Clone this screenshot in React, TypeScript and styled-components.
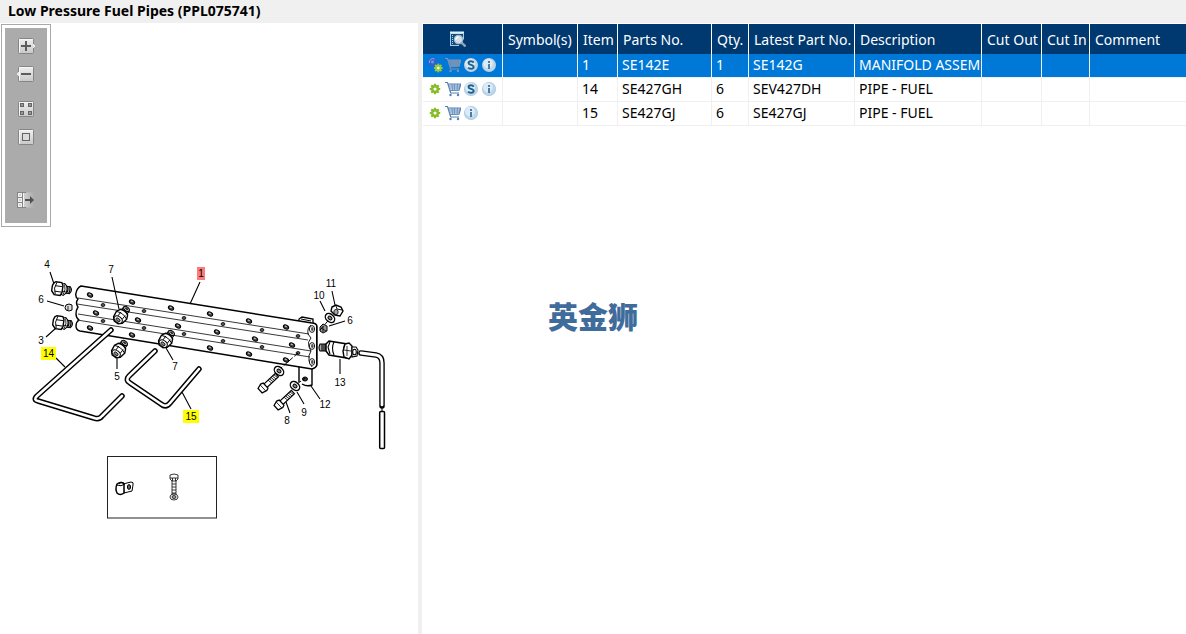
import React from "react";
import styled, { createGlobalStyle, css } from "styled-components";

const GlobalStyle = createGlobalStyle`
  *, *::before, *::after { box-sizing: border-box; }
  html, body, #root { height: 100%; }
  body {
    margin: 0;
    background: #ffffff;
    color: #000000;
    font-family: "Noto Sans", "Open Sans", sans-serif;
  }
`;

const Page = styled.div`
  display: flex;
  flex-direction: column;
  min-height: 100%;
  position: relative;
`;

const TitleBar = styled.header`
  background: #f0f0f0;
  padding: 0 8px 1px;
`;

const Title = styled.h1`
  margin: 0;
  font-size: 14px;
  line-height: 22px;
  font-weight: 700;
`;

const Workspace = styled.main`
  flex: 1;
  display: flex;
  align-items: stretch;
`;

const Viewer = styled.section`
  flex: 0 0 422px;
  border-right: 4px solid #f0f0f0;
  display: flex;
  flex-direction: column;
  align-items: flex-start;
  padding: 1px 0 0 1px;
`;

const ToolFrame = styled.div`
  border: 1px solid #a9a9a9;
  padding: 3px;
`;

const ToolStrip = styled.div`
  background: #ababab;
  display: flex;
  flex-direction: column;
  align-items: center;
  width: 42px;
  padding: 9px 0 14px;
`;

const ToolGroup = styled.div<{ $before?: number }>`
  margin-top: ${(p) => p.$before ?? 0}px;
`;

const IconButton = styled.button<{ $size: number }>`
  width: ${(p) => p.$size}px;
  height: ${(p) => p.$size}px;
  padding: 0;
  border: 0;
  background: none;
  display: block;
  cursor: pointer;
  svg { display: block; width: 100%; height: 100%; }
`;

const Drawing = styled.svg`
  display: block;
  width: 417px;
  height: auto;
  font-family: "Liberation Sans", Arial, sans-serif;
  font-size: 10px;
`;

const PartsPane = styled.section`
  flex: 1;
  min-width: 0;
  padding: 1px 0 0 1px;
`;

const Table = styled.table`
  width: 100%;
  table-layout: fixed;
  border-collapse: separate;
  border-spacing: 0;
  font-size: 14px;
`;

const cell = css`
  overflow: hidden;
  white-space: nowrap;
  text-align: left;
  font-weight: 400;
  vertical-align: middle;
`;

const HeadCell = styled.th`
  ${cell}
  height: 30px;
  padding: 2px 0 0 5px;
  line-height: 20px;
  background: #003870;
  color: #ffffff;
  border-right: 1px solid #ffffff;
  &:last-child { border-right: 0; }
`;

const SearchCell = styled(HeadCell)`
  padding: 0 0 0 27px;
`;

const Cell = styled.td`
  ${cell}
  height: 24px;
  padding: 0 0 2px 4px;
  line-height: 20px;
  border-right: 1px solid #f0f0f0;
  border-bottom: 1px solid #f0f0f0;
  &:last-child { border-right: 0; }
`;

const Row = styled.tr<{ $selected?: boolean }>`
  ${(p) => p.$selected && css`
    background: #0078d7;
    color: #ffffff;
  `}
`;

const Actions = styled.div`
  display: flex;
  gap: 2px;
`;

const Brand = styled.div`
  position: absolute;
  top: 50%;
  left: 50%;
  transform: translate(-50%, -50%);
  padding-bottom: 4px;
  color: #3f6c9b;
  font-family: "Noto Sans CJK SC", sans-serif;
  font-size: 30px;
  line-height: 32px;
  font-weight: 900;
  pointer-events: none;
`;

/* ---------- viewer toolbar icons ---------- */

const Plate = () => (
  <>
    <rect x="1.5" y="1.5" width="15" height="15" rx="1" fill="url(#plate)" stroke="#858585" />
    <path d="M2.5 15.5v-13h13" fill="none" stroke="#f7f7f7" />
  </>
);

const ZoomInIcon = () => (
  <svg viewBox="0 0 18 18">
    <defs>
      <linearGradient id="plate" x1="0" y1="0" x2="0" y2="1">
        <stop offset="0" stopColor="#f0f0f0" />
        <stop offset="1" stopColor="#c8c8c8" />
      </linearGradient>
      <linearGradient id="fade" x1="0" y1="0" x2="1" y2="0">
        <stop offset="0" stopColor="#e6e6e6" />
        <stop offset="1" stopColor="#ababab" />
      </linearGradient>
    </defs>
    <Plate />
    <path d="M16 7h1v1h1v2h-1v1h-1z" fill="#e8e8e8" />
    <path d="M9 4v10M4 9h10" stroke="#5c5c5c" strokeWidth="2" />
  </svg>
);

const ZoomOutIcon = () => (
  <svg viewBox="0 0 18 18">
    <Plate />
    <path d="M2 7H1v1H0v2h1v1h1z" fill="#e8e8e8" />
    <path d="M4 9h10" stroke="#5c5c5c" strokeWidth="2" />
  </svg>
);

const FitIcon = () => (
  <svg viewBox="0 0 18 18">
    <Plate />
    {[[3.5, 3.5], [11.5, 3.5], [3.5, 11.5], [11.5, 11.5]].map(([x, y]) => (
      <rect key={`${x}-${y}`} x={x} y={y} width="3" height="3" fill="#989898" stroke="#656565" />
    ))}
  </svg>
);

const ActualSizeIcon = () => (
  <svg viewBox="0 0 18 18">
    <Plate />
    <rect x="5.5" y="5.5" width="7" height="7" fill="#dcdcdc" stroke="#656565" />
  </svg>
);

const PanelIcon = () => (
  <svg viewBox="0 0 18 18">
    <path d="M0.500 1.500h17v15H0.500z" fill="url(#fade)" />
    <path d="M5.500 1v16M0.500 1v16M0 1.500h9M0 6.500h5M0 11.500h5M0 16.500h9" stroke="#858585" fill="none" />
    <path d="M1.500 2.500h3v3h-3zM1.500 7.500h3v3h-3zM1.500 12.500h3v3h-3zM6.500 2v14" fill="#d0d0d0" stroke="#f4f4f4" />
    <path d="M8 8h5V5l4 4-4 4v-3H8z" fill="#505050" />
  </svg>
);

/* ---------- parts list icons ---------- */

const SearchListIcon = () => (
  <svg viewBox="0 0 16 16">
    <path d="M0.500 14.500V2.500h13v6" fill="#0f4c7c" stroke="#9fd0e6" />
    <path d="M1 3h12v11H1z" fill="#0f4c7c" />
    <path d="M0 14.500h9" stroke="#9fd0e6" />
    <path d="M0 1.500h14" stroke="#dff2fa" strokeWidth="2" />
    <path d="M2.500 4v9" stroke="#a8d3e8" strokeDasharray="1 1" />
    <path d="m11.500 11.500 4 4" stroke="#8fa6ba" strokeWidth="2.400" />
    <circle cx="8.500" cy="8.500" r="4.200" fill="#d3e0ea" stroke="#9fb6c8" strokeWidth="1.200" />
    <path d="M6 8.500a2.500 2.500 0 0 1 2.500-2.500" fill="none" stroke="#ffffff" strokeWidth="1.500" />
  </svg>
);

const Cog = ({ x = 8, y = 8, r = 3.6, color = "#86bc25", hole = "#ffffff" }) => (
  <g transform={`translate(${x} ${y})`}>
    {[0, 45, 90, 135].map((a) => (
      <rect key={a} x={-r * 0.3} y={-r * 1.45} width={r * 0.6} height={r * 2.9} fill={color} transform={`rotate(${a})`} />
    ))}
    <circle r={r * 1.08} fill={color} />
    <circle r={r * 0.45} fill={hole} />
  </g>
);

const GearIcon = () => (
  <svg viewBox="0 0 16 16"><Cog /></svg>
);

const GearsIcon = () => (
  <svg viewBox="0 0 16 16">
    <Cog x={5.5} y={5} r={3.3} color="#3a5fc8" hole="#6f97ea" />
    <path d="M2.500 6a3.500 3.500 0 0 1 5-4" fill="none" stroke="#86a9f0" />
    <Cog x={11.3} y={11} r={3} color="#9acb3b" hole="#eef7dd" />
  </svg>
);

const CartIcon = ({ selected }: { selected?: boolean }) => {
  const c = selected ? "#7f93ad" : "#5780b2";
  return (
    <svg viewBox="0 0 16 16">
      <path d="M3.500 3H16l-2 6-8.500.500z" fill={selected ? "#5f92c8" : "#d2e0f0"} />
      <path d="M3.500 5h12M4.500 7h10.500M7 3l.500 6M9.500 3v6M12.500 3l-.500 6" fill="none" stroke={c} strokeWidth="0.700" />
      <path d="M0 1.500h2.500L5.700 12H14M3.200 3H15.700L14 9.200l-9 .300" fill="none" stroke={c} strokeWidth="1.200" />
      <circle cx="5.500" cy="14" r="1.200" fill={c} />
      <circle cx="13" cy="14" r="1.200" fill={c} />
    </svg>
  );
};

const Disc = () => (
  <>
    <circle cx="8" cy="8" r="7" fill="#a6c6dc" />
    <circle cx="8" cy="8" r="6.500" fill="#bcd7e9" />
    <circle cx="7" cy="6.500" r="4.800" fill="#dcebf5" />
  </>
);

const SupersededIcon = () => (
  <svg viewBox="0 0 16 16">
    <Disc />
    <path d="M10.700 5.600C10 4.600 9 4.300 8 4.300c-1.500 0-2.500.7-2.500 1.800C5.500 8.500 10.600 7.400 10.600 10c0 1.100-1.100 1.800-2.600 1.800-1.200 0-2.200-.4-2.800-1.300" fill="none" stroke="#1d608f" strokeWidth="1.900" />
  </svg>
);

const InfoIcon = () => (
  <svg viewBox="0 0 16 16">
    <Disc />
    <path d="M8 4v2M8 7v5" stroke="#4b7dab" strokeWidth="2" />
  </svg>
);

/* ---------- exploded drawing ---------- */

const bigHoles = [
  [90, 295], [132, 302], [171, 308], [210, 314], [249, 321], [286, 327],
  [96, 313], [138, 320], [178, 326], [217, 332], [255, 339], [292, 345],
  [90, 328], [132, 335], [210, 348], [249, 354], [286, 360],
];
const smallHoles = [
  [103, 305], [144, 311], [184, 318], [223, 324], [262, 330], [298, 336],
  [103, 321], [144, 328], [184, 334], [223, 341], [262, 347], [298, 353],
];

const Tube = ({ d }: { d: string }) => (
  <g fill="none" strokeLinejoin="round" strokeLinecap="round">
    <path d={d} stroke="#000000" strokeWidth="5.500" />
    <path d={d} stroke="#ffffff" strokeWidth="2.600" />
  </g>
);

const Fitting = ({ x, y }: { x: number; y: number }) => (
  <g transform={`translate(${x} ${y}) rotate(-52)`} fill="#ffffff" stroke="#000000">
    <path d="M4-3.500h5q3 3.500 0 7H4z" fill="#bbbbbb" />
    <ellipse cx="9" cy="0" rx="2" ry="3.200" />
    <ellipse cx="9.200" cy="0" rx="0.700" ry="1.600" fill="#333333" strokeWidth="0.600" />
    <path d="M-5-5.500 1-6.500l4 2q2 4.500 0 9l-4 2-6-1-3-3v-5z" strokeWidth="1.400" />
    <path d="M1-6q3 6 0 12M-2-2.500h5M-2 3h5" fill="none" strokeWidth="0.900" />
    <ellipse cx="-4.500" cy="0" rx="3" ry="4.500" />
    <ellipse cx="-4.800" cy="0" rx="1.400" ry="2.400" fill="#888888" strokeWidth="0.800" />
  </g>
);

const Plug = ({ x, y }: { x: number; y: number }) => (
  <g transform={`translate(${x} ${y}) rotate(8)`} fill="#ffffff" stroke="#000000">
    <path d="M3-3.500h6q3 3.500 0 7H3z" fill="#bbbbbb" />
    <path d="M6-3.500q2 3 0 7M8-3.500q2 3 0 7" fill="none" />
    <path d="M0-5 3-6l2 2q2 4 0 8L3 6 0 5z" />
    <path d="M3-5q2 5 0 10M0 2h5" fill="none" strokeWidth="0.800" />
    <path d="M-8-5l2-1.500h6l1.500 3v7L0 6.500h-6L-9 3v-5z" strokeWidth="1.400" />
    <path d="M-5-6q-3 6 0 12M-6-2.500H1M-6 3H1" fill="none" strokeWidth="0.900" />
  </g>
);

const Bolt = ({ x, y }: { x: number; y: number }) => (
  <g transform={`translate(${x} ${y}) rotate(-43)`} fill="#ffffff" stroke="#000000">
    <path d="M2-2.300h17v4.600H2z" strokeWidth="1.200" />
    <path d="M9-2l.7 4M11-2l.7 4M13-2l.7 4M15-2l.7 4M17-2l.7 4" strokeWidth="0.800" />
    <path d="M-4-3 1-4.500l2.500 1v7l-2.500 1-5-1.500z" strokeWidth="1.300" />
    <path d="M0-4v8" strokeWidth="0.800" />
  </g>
);

const Washer = ({ x, y }: { x: number; y: number }) => (
  <g transform={`translate(${x} ${y}) rotate(42)`} stroke="#000000">
    <ellipse rx="5.300" ry="3.800" fill="#ffffff" strokeWidth="1.400" />
    <ellipse rx="2.300" ry="1.600" fill="#888888" />
  </g>
);

const callouts: [string, number, number][] = [
  ["4", 47, 268], ["7", 111, 273], ["6", 41, 303], ["3", 41, 344],
  ["5", 117, 380], ["7", 175, 370], ["11", 331, 287], ["10", 319, 299],
  ["6", 350, 324], ["13", 340, 386], ["12", 325, 408], ["9", 304, 416],
  ["8", 287, 424],
];

const hotspots = [
  { label: "1", x: 197, y: 267, w: 8, fill: "#fb7b7b" },
  { label: "14", x: 41, y: 347, w: 15, fill: "#ffff00" },
  { label: "15", x: 183, y: 410, w: 16, fill: "#ffff00" },
];

const PipesDrawing = () => (
  <Drawing viewBox="1 227 417 300" role="img" aria-label="Low pressure fuel pipes">
    <path d="M299 366v16M302 384q5 3 10 1v-19" fill="none" stroke="#000000" strokeWidth="1.400" />
    <path d="M299 322v-3l3-2 11 2v5" fill="#ffffff" stroke="#000000" strokeWidth="1.300" />
    <path d="M301 319l10 2" stroke="#000000" />
    <path
      d="M81 286 312 323q4 0 5 3v39q-1 3-5 4L80 331q-4-1-4-5 0-4 3-6-3-2-3-6t2-7q-3-4 0-8-3-2-2-6 1-5 5-7z"
      fill="#ffffff" stroke="#000000" strokeWidth="1.400" strokeLinejoin="round"
    />
    <path d="M78 298l231 36M77 304l231 36M78 314l233 37M77 320l233 37" fill="none" stroke="#222222" strokeWidth="0.900" />
    <path d="M311 325q-4 3-3 9l3 4q-4 4-2 9l2 4q-3 4-2 10l3 6" fill="none" stroke="#000000" strokeWidth="0.900" />
    <path d="M316.500 326v39" stroke="#000000" />
    {bigHoles.map(([x, y]) => (
      <g key={`${x}-${y}`} transform={`translate(${x} ${y}) rotate(30)`}>
        <ellipse rx="2.800" ry="1.900" fill="#444444" stroke="#000000" />
        <path d="M-1.500-.5h2" stroke="#dddddd" />
      </g>
    ))}
    {smallHoles.map(([x, y]) => (
      <ellipse key={`${x}-${y}`} cx={x} cy={y} rx="1.900" ry="1.500" fill="#555555" stroke="#000000" strokeWidth="0.800" />
    ))}
    {[329, 346, 362].map((y) => (
      <g key={y}>
        <ellipse cx="312" cy={y} rx="2.600" ry="3.400" fill="#ffffff" stroke="#000000" strokeWidth="0.900" />
        <ellipse cx="312.300" cy={y} rx="1.300" ry="1.900" fill="#555555" />
      </g>
    ))}
    <ellipse cx="305" cy="379" rx="2.500" ry="2" fill="#333333" stroke="#000000" />

    <Tube d="M111 330 37 396Q33 400 38 401L94 418Q99 420 102 416L122 396" />
    <Tube d="M155 351 129 376Q125 380 130 383L161 404Q166 408 170 403L199 369" />
    <g fill="none">
      <path d="M361 353 376 355Q382 356 382 363V406" stroke="#000000" strokeWidth="5.500" strokeLinecap="round" />
      <path d="M361 353 376 355Q382 356 382 363V405" stroke="#ffffff" strokeWidth="2.800" strokeLinecap="round" />
      <path d="M382 406v6" stroke="#000000" />
      <rect x="379.700" y="411.500" width="4.800" height="37" rx="1" fill="#ffffff" stroke="#000000" strokeWidth="1.500" />
    </g>

    <Plug x={61} y={289} />
    <Plug x={62} y={323} />
    <g fill="#dddddd" stroke="#000000">
      <path d="M66 305q3-2 6 0v5q-3 2-6 0q-2-2 0-5z" />
      <path d="M68 306v4" strokeWidth="0.800" />
      <path d="M320 327l3-3 4 2v5l-4 2-3-2z" fill="#999999" />
      <path d="M321 328l5 3M323 326v6" strokeWidth="0.800" />
    </g>
    <Fitting x={121} y={316} />
    <Fitting x={119} y={350} />
    <Fitting x={166} y={340} />

    <g fill="#ffffff" stroke="#000000" strokeWidth="1.100">
      <path d="M320 344h6v7h-6q-2-3 0-7z" fill="#aaaaaa" />
      <path d="M322 344v7M324 344v7" />
      <path d="M329 341l18 3v14l-18-3-3-4v-7z" strokeWidth="1.500" />
      <path d="M330 342l-2 5 2 7M334 342q-3 6 0 13M345 344q-3 6 0 13" fill="none" />
      <path d="M345 344l4-1 3 3v9l-3 4-5-2-1-6z" strokeWidth="1.400" />
      <path d="M347 346v10M344 350l7 1" strokeWidth="0.800" />
      <path d="M352 347l4 0 2 3-1 6-5 1z" />
      <ellipse cx="354.500" cy="352" rx="1.800" ry="2.800" />
    </g>

    <path d="M298 353 281 368M320 330 334 314M297 384l8-6" stroke="#000000" strokeDasharray="5 2" />
    <Bolt x={263} y={388} />
    <Bolt x={279} y={405} />
    <Washer x={279} y={371} />
    <Washer x={295} y={386} />
    <Washer x={330} y={318} />
    <g fill="#ffffff" stroke="#000000">
      <path d="M332 307l4-2 5 2 2 4-3 5-5-1-4-4z" strokeWidth="1.400" />
      <ellipse cx="336" cy="312" rx="2.200" ry="2.600" fill="#aaaaaa" strokeWidth="0.800" />
      <path d="M336 306l1 3 5 1" fill="none" strokeWidth="0.900" />
    </g>

    <path
      d="M50 272l4 12M112 277l7 32M200 282l-10 22M47 301l17 5M46 337l10-9M56 358l9 9M117 369v-11M173 360l-7-12M191 409l-9-17M320 301l5 10M332 291l3 14M345 321l-16 5M340 374v-15M320 399l-9-13M304 404l-7-12M290 413l-4-11"
      stroke="#000000" strokeWidth="1.100"
    />

    {hotspots.map((h) => (
      <g key={h.label}>
        <rect x={h.x} y={h.y} width={h.w} height="13" fill={h.fill} />
        <text x={h.x + h.w / 2} y={h.y + 10} textAnchor="middle">{h.label}</text>
      </g>
    ))}
    {callouts.map(([label, x, y]) => (
      <text key={`${label}-${x}`} x={x} y={y} textAnchor="middle">{label}</text>
    ))}

    <rect x="107.500" y="456.500" width="109" height="61.500" fill="none" stroke="#222222" />
    <g fill="#ffffff" stroke="#000000">
      <path d="M123 484l8-2q3 0 2 3l-1 6-8 2z" />
      <path d="M117 484q4-3 7 0v9q-4 3-7 0-2-4 0-9z" strokeWidth="1.500" />
      <path d="M117 485q4 2 8-1M119 484q2-3 5-1" fill="none" />
      <ellipse cx="129" cy="487" rx="1.600" ry="2.400" fill="#666666" />
    </g>
    <g fill="#ffffff" stroke="#222222" strokeWidth="0.900">
      <path d="M172 480h4v14h-4z" />
      <path d="M172 484h4M172 487h4M172 490h4M172 493h4" />
      <path d="M170 475q4-2 8 0v4l-2 2h-4l-2-2z" />
      <path d="M170 478h8M172.500 478v3M175.500 478v3" />
      <ellipse cx="174" cy="497" rx="4" ry="3" />
      <ellipse cx="174" cy="497" rx="2" ry="1.500" fill="#999999" />
    </g>
  </Drawing>
);

/* ---------- data ---------- */

const columns: { name: string; width?: number }[] = [
  { name: "Symbol(s)", width: 75 },
  { name: "Item", width: 40 },
  { name: "Parts No.", width: 94 },
  { name: "Qty.", width: 37 },
  { name: "Latest Part No.", width: 106 },
  { name: "Description", width: 127 },
  { name: "Cut Out", width: 60 },
  { name: "Cut In", width: 48 },
  { name: "Comment" },
];

const parts = [
  { item: "1", no: "SE142E", qty: "1", latest: "SE142G", text: "MANIFOLD ASSEM", assembly: true, superseded: true, selected: true },
  { item: "14", no: "SE427GH", qty: "6", latest: "SEV427DH", text: "PIPE - FUEL", superseded: true },
  { item: "15", no: "SE427GJ", qty: "6", latest: "SE427GJ", text: "PIPE - FUEL" },
];

export default function App() {
  return (
    <Page>
      <GlobalStyle />
      <TitleBar><Title>Low Pressure Fuel Pipes (PPL075741)</Title></TitleBar>
      <Workspace>
        <Viewer>
          <ToolFrame>
            <ToolStrip role="toolbar" aria-label="Drawing tools">
              <ToolGroup>
                <IconButton $size={18} aria-label="Zoom in"><ZoomInIcon /></IconButton>
              </ToolGroup>
              <ToolGroup $before={10}>
                <IconButton $size={18} aria-label="Zoom out"><ZoomOutIcon /></IconButton>
              </ToolGroup>
              <ToolGroup $before={17}>
                <IconButton $size={18} aria-label="Fit to window"><FitIcon /></IconButton>
              </ToolGroup>
              <ToolGroup $before={10}>
                <IconButton $size={18} aria-label="Actual size"><ActualSizeIcon /></IconButton>
              </ToolGroup>
              <ToolGroup $before={45}>
                <IconButton $size={18} aria-label="Toggle list"><PanelIcon /></IconButton>
              </ToolGroup>
            </ToolStrip>
          </ToolFrame>
          <PipesDrawing />
        </Viewer>
        <PartsPane>
          <Table>
            <colgroup>
              <col style={{ width: 80 }} />
              {columns.map((c) => <col key={c.name} style={{ width: c.width }} />)}
            </colgroup>
            <thead>
              <tr>
                <SearchCell scope="col">
                  <IconButton $size={16} aria-label="Search parts"><SearchListIcon /></IconButton>
                </SearchCell>
                {columns.map((c) => <HeadCell key={c.name} scope="col">{c.name}</HeadCell>)}
              </tr>
            </thead>
            <tbody>
              {parts.map((p) => (
                <Row key={p.item} $selected={p.selected}>
                  <Cell>
                    <Actions>
                      <IconButton $size={16} aria-label="Part details">{p.assembly ? <GearsIcon /> : <GearIcon />}</IconButton>
                      <IconButton $size={16} aria-label="Add to cart"><CartIcon selected={p.selected} /></IconButton>
                      {p.superseded && <IconButton $size={16} aria-label="Supersession"><SupersededIcon /></IconButton>}
                      <IconButton $size={16} aria-label="Information"><InfoIcon /></IconButton>
                    </Actions>
                  </Cell>
                  <Cell />
                  <Cell>{p.item}</Cell>
                  <Cell>{p.no}</Cell>
                  <Cell>{p.qty}</Cell>
                  <Cell>{p.latest}</Cell>
                  <Cell>{p.text}</Cell>
                  <Cell />
                  <Cell />
                  <Cell />
                </Row>
              ))}
            </tbody>
          </Table>
        </PartsPane>
      </Workspace>
      <Brand>英金狮</Brand>
    </Page>
  );
}
